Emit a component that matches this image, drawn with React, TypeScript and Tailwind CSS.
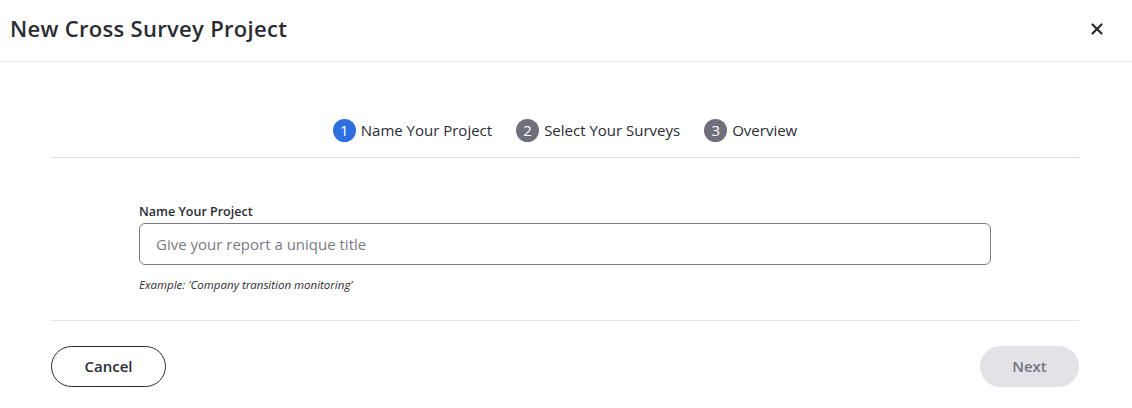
import { X } from "lucide-react"

const steps = [
  { n: 1, label: "Name Your Project", active: true },
  { n: 2, label: "Select Your Surveys", active: false },
  { n: 3, label: "Overview", active: false },
]

export default function App() {
  return (
    <div className="w-[1132px] h-[408px] bg-white text-[#2a2a33] font-['Open_Sans','Lato',sans-serif] flex flex-col">
      {/* header */}
      <div className="h-[62px] border-b border-[#ececef] flex items-center justify-between pl-[10px] pr-[26px]">
        <h1 className="text-[22px] font-semibold tracking-[0.3px] text-[#2b2b33] -mt-[4px]">New Cross Survey Project</h1>
        <X className="w-[18px] h-[18px] text-[#2b2b33] -mt-[4px]" strokeWidth={3} />
      </div>

      <div className="pl-[51px] pr-[53px] flex flex-col flex-1">
        {/* stepper */}
        <div className="h-[96px] border-b border-[#dcdce0] flex items-end justify-center gap-[24px] pb-[15px]">
          {steps.map((s) => (
            <div key={s.n} className="flex items-center gap-[5px]">
              <span
                className={
                  "w-[23px] h-[23px] rounded-full flex items-center justify-center text-white text-[15px] " +
                  (s.active ? "bg-[#2d6fe0]" : "bg-[#6f6e7b]")
                }
              >
                {s.n}
              </span>
              <span className="text-[15px] text-[#2b2b33]">{s.label}</span>
            </div>
          ))}
        </div>

        {/* form */}
        <div className="h-[163px] border-b border-[#e4e4e8] px-[88px] pt-[46px]">
          <label className="block text-[12.5px] font-semibold text-[#2b2b33] leading-[16px]">Name Your Project</label>
          <div className="mt-[3px] w-[852px] h-[42px] border border-[#7d7b88] rounded-[6px] flex items-center px-[16px]">
            <input
              className="w-full outline-none text-[15px] placeholder:text-[#7c7a86] bg-transparent"
              placeholder="Give your report a unique title"
            />
          </div>
          <p className="mt-[11px] text-[11.5px] italic text-[#2b2b33]">Example: 'Company transition monitoring'</p>
        </div>

        {/* footer */}
        <div className="flex items-center justify-between pt-[25px]">
          <button className="w-[115px] h-[41px] rounded-full border border-[#2b2b33] text-[15px] font-semibold text-[#2b2b33]">
            Cancel
          </button>
          <button className="w-[99px] h-[41px] rounded-full bg-[#e3e3e7] text-[15px] font-semibold text-[#75737f]">
            Next
          </button>
        </div>
      </div>
    </div>
  )
}
